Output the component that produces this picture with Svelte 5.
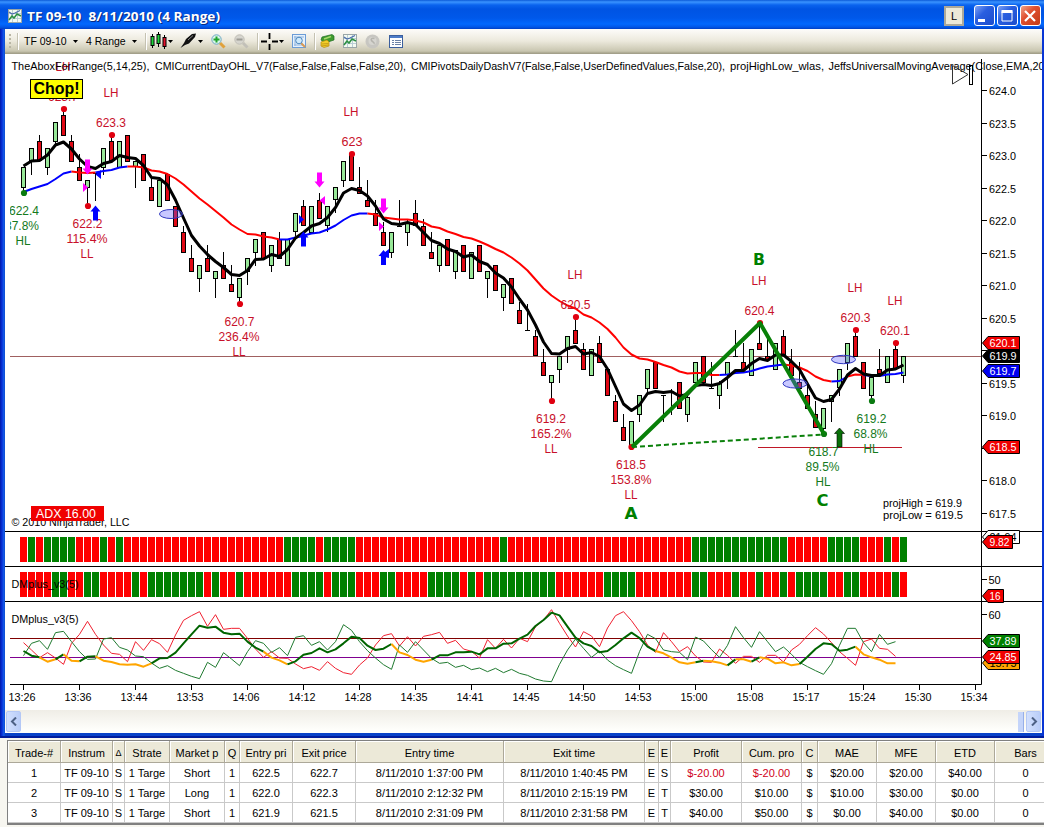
<!--
  App.svelte
  Trading chart window with indicator panels and the trades grid below it.
-->

<script lang="ts">
	type Candle = { high: number; top: number; bottom: number; low: number; up: boolean };

	const BAR_WIDTH = 8;
	const FIRST_BAR = 23.5;

	const barX = (i: number) => FIRST_BAR + i * BAR_WIDTH;
	const priceY = (price: number) => 90 + (624 - price) * 65;

	// direction, high, body top, body bottom, low
	const rawCandles = `
		g 167 167 188 191;g 148 148 161 175;r 135 141 161 161;g 148 148 168 175;g 122 122 142 144;r 109 115 136 136;r 135 141 162 162;r 154 167 181 181;g 180 180 188 206;g 173 173 173 201;
		g 148 148 168 175;r 135 141 161 161;g 141 141 168 168;r 135 135 162 162;g 161 161 167 188;r 154 154 181 181;r 178 187 201 201;g 180 180 207 207;r 174 174 201 201;r 206 206 227 227;
		r 226 232 253 253;r 245 258 272 272;g 265 265 279 292;r 245 258 272 272;g 271 271 279 298;r 252 265 279 279;r 265 284 292 292;g 278 278 298 304;g 258 258 272 285;g 239 239 253 266;
		r 232 232 259 259;g 245 245 266 272;r 232 239 259 259;g 239 239 266 266;g 213 213 232 236;r 200 206 226 226;g 206 206 233 233;r 193 200 219 219;g 206 206 226 232;g 187 187 200 213;
		g 161 161 181 187;r 152 155 181 181;r 167 187 194 194;r 180 200 207 207;r 200 213 226 226;r 222 232 246 246;g 232 232 253 258;g 200 226 226 226;g 219 223 233 246;r 200 213 226 226;
		r 219 226 246 246;r 232 252 259 259;g 245 245 266 272;r 239 239 266 266;g 250 250 272 279;r 245 245 272 272;g 252 252 279 279;r 245 245 272 272;g 271 271 279 298;r 265 265 291 291;
		g 284 284 298 311;r 278 278 304 304;r 302 310 324 324;g 304 330 330 330;r 330 336 356 356;r 349 362 376 376;g 375 375 383 400;g 356 356 370 383;g 336 336 350 363;r 317 330 344 344;
		r 343 349 370 370;g 349 349 376 376;r 336 343 363 363;r 369 369 396 396;r 395 401 422 422;r 414 427 441 441;g 421 421 447 447;g 395 395 415 422;g 369 369 389 393;r 362 362 389 389;
		g 395 395 395 422;g 389 391 391 415;r 382 382 409 409;g 395 397 415 422;g 362 362 383 387;r 356 356 383 383;g 362 388 388 388;g 381 383 396 409;g 362 362 375 389;g 330 356 356 356;
		r 343 362 370 370;g 349 349 376 376;r 323 343 350 350;r 337 356 360 360;g 343 343 370 370;r 330 336 356 356;r 349 362 376 376;r 362 382 389 389;r 383 395 409 409;r 401 414 428 428;
		g 408 408 429 434;g 395 395 402 422;g 369 369 388 396;g 343 343 363 370;r 330 336 357 357;r 362 362 389 389;g 377 377 396 400;r 349 369 374 374;g 356 356 383 383;r 344 349 369 369;
		g 356 356 376 383`;

	const candles: Candle[] = rawCandles.split(';').map((row) => {
		const [dir, high, top, bottom, low] = row.trim().split(' ');
		return { up: dir === 'g', high: +high, top: +top, bottom: +bottom, low: +low };
	});

	const fastAverage = [
		166, 161, 160.5, 155, 145, 142, 149, 159, 166.5, 168.5, 163.5, 161.5, 155.5, 157.5, 158.5, 165.5, 177.5, 178.5, 185, 200,
		218, 235.5, 246, 254.5, 261.5, 267.5, 274.5, 275.5, 270.5, 259.5, 259, 254.5, 256.5, 249.5, 238, 232.5, 226, 223.5, 217.5, 207.5,
		193, 188.5, 190.5, 196, 206, 219, 223.5, 224.5, 222.5, 224.5, 232.5, 240.5, 243.5, 249, 251.5, 257, 255, 261.5, 264.5, 273,
		278, 287, 299, 310, 325, 342, 353.5, 354, 348.5, 346.5, 354, 352.5, 356.5, 369, 386.5, 404, 410.5, 405, 393.5, 391.5,
		392.5, 391.5, 396, 394.5, 385.5, 384.5, 385.5, 383.5, 377.5, 370.5, 370.5, 363.5, 358.5, 360.5, 355, 355, 361.5, 369.5, 384, 398,
		401.5, 399.5, 389, 375, 368.5, 374, 375.5, 375.5, 370, 369, 365
	];

	const slowAverage = [
		192, 189, 186.5, 184, 179, 173.5, 171.5, 172.5, 173, 172.5, 171, 170, 167.5, 166.5, 166.5, 167.5, 170.5, 171.5, 174, 178.5,
		184.5, 191.5, 198.5, 204.5, 211, 217.5, 224.5, 229.5, 234, 234.5, 236.5, 237.5, 239.5, 239.5, 237.5, 235.5, 233.5, 232.5, 229.5, 225.5,
		220, 215.5, 213.5, 213.5, 214.5, 217.5, 218.5, 219.5, 219.5, 220.5, 222.5, 226.5, 228, 231.5, 234, 237, 238.5, 241.5, 245, 249,
		252.5, 257.5, 263.5, 270.5, 279.5, 288.5, 295.5, 301, 305.5, 308.5, 314.5, 317.5, 322.5, 329, 337.5, 347.5, 354.5, 358.5, 359.5, 362,
		365, 367.5, 371.5, 373.5, 373, 373, 375, 375, 374.5, 373, 372.5, 371, 368.5, 366.5, 365.5, 364.5, 365.5, 367.5, 371, 376.5,
		380, 381.5, 381, 376.5, 374.5, 375, 376, 376, 374.5, 374, 372.5
	];
	const slowRuns = [
		[0, 6, 'blue'], [6, 9, 'red'], [9, 13, 'blue'], [13, 32, 'red'], [32, 43, 'blue'], [43, 87, 'red'],
		[87, 95, 'blue'], [95, 101, 'red'], [101, 103, 'blue'], [103, 105, 'red'], [105, 110, 'blue']
	] as [number, number, string][];

	// DM panel values are thirds of a pixel below y = 500
	const dmMinus = [
		428, 450, 473, 458, 474, 493, 430, 403, 364, 403, 435, 460, 463, 485, 425, 451, 419, 431, 457, 405,
		361, 347, 335, 379, 344, 388, 385, 385, 415, 447, 472, 455, 474, 475, 492, 506, 500, 511, 485, 505,
		518, 523, 495, 474, 435, 407, 401, 438, 410, 438, 409, 404, 397, 430, 421, 447, 454, 474, 419, 445,
		418, 444, 415, 425, 380, 360, 329, 370, 408, 441, 395, 408, 440, 384, 347, 335, 362, 395, 435, 457,
		398, 425, 455, 440, 468, 486, 487, 447, 466, 490, 469, 469, 487, 466, 466, 486, 450, 433, 407, 383,
		402, 428, 455, 475, 496, 425, 417, 445, 448, 469
	];
	const dmPlus = [
		467, 430, 422, 448, 398, 394, 425, 455, 478, 477, 417, 413, 442, 450, 468, 470, 489, 505, 497, 511,
		520, 529, 536, 487, 502, 458, 477, 497, 455, 422, 430, 457, 443, 467, 412, 407, 436, 425, 450, 425,
		374, 391, 425, 452, 474, 494, 508, 435, 457, 425, 450, 475, 490, 487, 502, 496, 509, 504, 515, 505,
		518, 508, 520, 526, 537, 543, 545, 493, 450, 417, 445, 472, 453, 480, 497, 509, 520, 455, 403, 416,
		450, 455, 457, 479, 411, 423, 449, 472, 436, 380, 413, 442, 395, 425, 455, 441, 463, 487, 500, 512,
		523, 491, 436, 385, 385, 428, 455, 403, 433, 425
	];
	const adx = [
		453, 467, 472, 485, 478, 463, 482, 484, 470, 469, 482, 486, 493, 494, 493, 500, 490, 475, 474, 458,
		430, 403, 377, 383, 380, 398, 403, 401, 425, 443, 455, 473, 481, 493, 484, 464, 459, 445, 457, 448,
		430, 410, 414, 437, 450, 446, 432, 457, 465, 479, 485, 479, 466, 466, 457, 457, 455, 463, 445, 445,
		431, 430, 416, 404, 378, 360, 338, 346, 380, 413, 430, 438, 457, 453, 435, 415, 398, 414, 440, 453,
		460, 473, 487, 491, 487, 482, 484, 488, 496, 478, 478, 485, 472, 476, 490, 487, 496, 492, 470, 447,
		430, 433, 452, 449, 440, 463, 472, 479, 490, 490
	];
	const adxRuns = [
		[0, 2, 'darkgreen'], [2, 4, 'orange'], [4, 5, 'darkgreen'], [5, 7, 'orange'], [7, 9, 'darkgreen'], [9, 16, 'orange'],
		[16, 30, 'darkgreen'], [30, 33, 'orange'], [33, 46, 'darkgreen'], [46, 51, 'orange'], [51, 79, 'darkgreen'],
		[79, 84, 'orange'], [84, 85, 'darkgreen'], [85, 88, 'orange'], [88, 89, 'darkgreen'], [89, 91, 'orange'],
		[91, 92, 'darkgreen'], [92, 97, 'orange'], [97, 104, 'darkgreen'], [104, 109, 'orange']
	] as [number, number, string][];

	// Run lengths, decoded to one letter per bar
	function decode(runs: string): string[] {
		return runs.split(' ').flatMap((r) => Array(+r.slice(1)).fill(r[0]));
	}
	const strips = [
		{ y: 537, bars: decode('r1 g1 r1 g4 r3 g1 r1 g1 r20 g4 r1 g4 r18 g1 r23 g12 r5 g4 r3 g1 r1 g1') },
		{ y: 572, bars: decode('r4 g2 r2 g2 r4 g1 r1 g7 r1 g1 r2 g1 r6 g4 r1 g3 r3 g2 r4 g4 r1 g1 r1 g9 r6 g4 r7 g2 r3 g1 r2 g1 r2 g1 r1 g4 r2 g2 r4 g1 r1') }
	];

	function points(values: number[], from = 0, to = values.length - 1): string {
		return values.slice(from, to + 1).map((v, k) => `${barX(from + k)},${v}`).join(' ');
	}
	const toPanel = (values: number[]) => values.map((v) => 500 + v / 3);
	const adxPx = toPanel(adx);

	const priceTicks = Array.from({ length: 14 }, (_, k) => 624 - k * 0.5);
	const hiddenTicks = [620, 618.5];
	const times = ['13:26', '13:36', '13:44', '13:53', '14:06', '14:12', '14:28', '14:35', '14:41', '14:45', '14:50', '14:53', '15:00', '15:08', '15:17', '15:24', '15:30', '15:34'];

	// Swing labels: x, baseline, text, colour
	const swings = [
		[63, 71, 'LH', 'red'], [63, 101, '623.7', 'red'], [111, 97, 'LH', 'red'], [111, 127, '623.3', 'red'],
		[24, 215, '622.4', 'green'], [22, 230, '37.8%', 'green'], [23, 245, 'HL', 'green'],
		[87.5, 228, '622.2', 'red'], [87, 243, '115.4%', 'red'], [87, 258, 'LL', 'red'],
		[351, 116, 'LH', 'red'], [352, 146, '623', 'red'],
		[239.5, 326, '620.7', 'red'], [239, 341, '236.4%', 'red'], [239, 356, 'LL', 'red'],
		[575, 279, 'LH', 'red'], [575.5, 309, '620.5', 'red'],
		[551, 423, '619.2', 'red'], [551, 438, '165.2%', 'red'], [551, 453, 'LL', 'red'],
		[631, 469, '618.5', 'red'], [631, 484, '153.8%', 'red'], [631, 499, 'LL', 'red'],
		[759, 285, 'LH', 'red'], [759.5, 315, '620.4', 'red'],
		[855, 292, 'LH', 'red'], [855.5, 322, '620.3', 'red'], [895, 305, 'LH', 'red'], [895, 335, '620.1', 'red'],
		[871.5, 423, '619.2', 'green'], [870.5, 438, '68.8%', 'green'], [871, 453, 'HL', 'green'],
		[823.5, 456, '618.7', 'green'], [822.5, 471, '89.5%', 'green'], [823, 486, 'HL', 'green']
	] as [number, number, string, string][];
	const swingWidth: Record<number, number> = { 2: 15, 3: 21, 5: 30, 6: 41 };
	const labelWidth = (t: string) => (t.endsWith('%') ? (t.length === 5 ? 34 : 41) : t === 'LL' ? 13 : swingWidth[t.length]);

	const dots = [
		[64, 109, 'red'], [112, 135, 'red'], [24, 193, 'green'], [88, 206, 'red'], [352, 154, 'red'], [240, 304, 'red'],
		[576, 317, 'red'], [552, 401, 'red'], [631.5, 447, 'red'], [760, 323, 'red'], [856, 330, 'red'], [896, 343, 'red'],
		[872, 401, 'green'], [824, 434, 'green']
	] as [number, number, string][];

	const headings = [
		{ text: 'TheAboxForRange(5,14,25),', x: 11.5, w: 138 },
		{ text: 'CMICurrentDayOHL_V7(False,False,False,False,20),', x: 155, w: 251 },
		{ text: 'CMIPivotsDailyDashV7(False,False,UserDefinedValues,False,20),', x: 411, w: 314 },
		{ text: 'projHighLow_wlas,', x: 730, w: 94 },
		{ text: 'JeffsUniversalMovingAverage(Close,EMA,20', x: 828.5, w: 216 }
	];

	const flags = [
		{ y: 343, text: '620.1', fill: '#f00000', ink: '#fff', w: 37 },
		{ y: 371, text: '619.7', fill: '#0000f0', ink: '#fff', w: 37 },
		{ y: 356, text: '619.9', fill: '#000', ink: '#fff', w: 37 },
		{ y: 447, text: '618.5', fill: '#f00000', ink: '#fff', w: 37 },
		{ y: 537, text: '21.94', fill: '#fff', ink: '#000', w: 37 },
		{ y: 542, text: '9.82', fill: '#f00000', ink: '#fff', w: 30 },
		{ y: 596, text: '16', fill: '#f00000', ink: '#fff', w: 21 },
		{ y: 641, text: '37.89', fill: '#008000', ink: '#fff', w: 37 },
		{ y: 663, text: '15.75', fill: '#ffa500', ink: '#000', w: 37 },
		{ y: 657, text: '24.85', fill: '#f00000', ink: '#fff', w: 37 }
	];

	const columns = ['Trade-#', 'Instrum', 'Δ', 'Strate', 'Market p', 'Q', 'Entry pri', 'Exit price', 'Entry time', 'Exit time', 'E', 'E', 'Profit', 'Cum. pro', 'C', 'MAE', 'MFE', 'ETD', 'Bars'];
	const trades = [
		['1', 'TF 09-10', 'S', '1 Targe', 'Short', '1', '622.5', '622.7', '8/11/2010 1:37:00 PM', '8/11/2010 1:40:45 PM', 'E', 'S', '$-20.00', '$-20.00', '$', '$20.00', '$20.00', '$40.00', '0'],
		['2', 'TF 09-10', 'S', '1 Targe', 'Long', '1', '622.0', '622.3', '8/11/2010 2:12:32 PM', '8/11/2010 2:15:19 PM', 'E', 'T', '$30.00', '$10.00', '$', '$10.00', '$30.00', '$0.00', '0'],
		['3', 'TF 09-10', 'S', '1 Targe', 'Short', '1', '621.9', '621.5', '8/11/2010 2:31:09 PM', '8/11/2010 2:31:58 PM', 'E', 'T', '$40.00', '$50.00', '$', '$0.00', '$40.00', '$0.00', '0']
	];
</script>

{#snippet chartIcon()}
	<svg width="14" height="14" viewBox="0 0 14 14">
		<rect x="0.5" y="0.5" width="13" height="13" fill="#f4faf2" stroke="#9aa6a8" />
		<path d="M1 4.5H13M1 9.5H13M4.5 1V13M9.5 1V13" stroke="#b9cfd6" />
		<path d="M1 3L4 5L7 4L12 1.5" fill="none" stroke="#4b6cab" stroke-width="1.2" />
		<path d="M1 11L4 7L6 9L9 5L13 7" fill="none" stroke="#2c8f43" stroke-width="1.5" />
	</svg>
{/snippet}

{#snippet caret()}
	<svg class="caret" width="5" height="3" viewBox="0 0 5 3"><path d="M0 0H5L2.5 3Z" fill="#000" /></svg>
{/snippet}

{#snippet arrow(x: number, y: number, down: boolean, fill: string)}
	<path
		d={down ? 'M-2.5 -7.5H2.5V1.5H5L0 7.5L-5 1.5H-2.5Z' : 'M-2.5 7.5H2.5V-1.5H5L0 -7.5L-5 -1.5H-2.5Z'}
		transform="translate({x} {y})"
		{fill}
	/>
{/snippet}

<div class="screen">
	<section class="window">
		<header class="titlebar">
			<span class="app-icon">{@render chartIcon()}</span>
			<svg class="caption" width="210" height="24">
				<text x="5" y="17" textLength="193" lengthAdjust="spacingAndGlyphs" xml:space="preserve">TF 09-10&#160; 8/11/2010 (4 Range)</text>
			</svg>
			<button class="link-button">L</button>
			<button class="win-button" aria-label="Minimize"><svg width="20" height="20"><rect x="4" y="13" width="7" height="3" fill="#fff" /></svg></button>
			<button class="win-button" aria-label="Maximize"><svg width="20" height="20"><path d="M5 5.5H15V15H5Z" fill="none" stroke="#fff" /><rect x="4.5" y="4" width="11" height="3" fill="#fff" /></svg></button>
			<button class="win-button close" aria-label="Close"><svg width="20" height="20"><path d="M5 5L15 15M15 5L5 15" stroke="#fff" stroke-width="2.2" /></svg></button>
		</header>

		<nav class="toolbar">
			<span class="grip"></span>
			<span class="sep first"></span>
			<span class="tool-label instrument">TF 09-10</span>{@render caret()}
			<span class="tool-label range">4 Range</span>{@render caret()}
			<span class="sep bars-sep"></span>
			<svg class="ico candles-ico" width="18" height="18" viewBox="0 0 18 18">
				<path d="M3.5 2V16M9.5 0V15M15.5 3V17" stroke="#000" />
				<rect x="2" y="4.5" width="3" height="9" fill="#1fd43c" stroke="#000" />
				<rect x="8" y="2.5" width="3" height="9" fill="#1fd43c" stroke="#000" />
				<rect x="14" y="5.5" width="3" height="9" fill="#e3122c" stroke="#000" />
			</svg>{@render caret()}
			<svg class="ico pen-ico" width="17" height="16" viewBox="0 0 17 16">
				<path d="M0.5 15L4 10L6 6L12 1L16 0.5L15 4L9 10.5L5 12Z" fill="#111" />
				<path d="M8 7L13 2.5" stroke="#8b8b8b" />
			</svg>{@render caret()}
			<svg class="ico zoomin-ico" width="15" height="15" viewBox="0 0 15 15">
				<path d="M9 9L13.5 13.5" stroke="#e0a13c" stroke-width="3" />
				<circle cx="5.5" cy="5.5" r="4.7" fill="#d9f4ea" stroke="#6fa7c4" />
				<path d="M5.5 2.5V8.5M2.5 5.5H8.5" stroke="#21a52f" stroke-width="2" />
			</svg>
			<svg class="ico zoomout-ico" width="15" height="15" viewBox="0 0 15 15">
				<path d="M9 9L13.5 13.5" stroke="#c2c0b8" stroke-width="3" />
				<circle cx="5.5" cy="5.5" r="4.7" fill="#d6d5ce" stroke="#c0beb6" />
				<path d="M2.5 5.5H8.5" stroke="#9c9b94" stroke-width="2" />
			</svg>
			<span class="sep cross-sep"></span>
			<svg class="ico cross-ico" width="17" height="17" viewBox="0 0 17 17">
				<path d="M8.5 0V6M8.5 11V17M0 8.5H6M11 8.5H17" stroke="#000" stroke-width="1.8" />
			</svg>{@render caret()}
			<svg class="ico find-ico" width="14" height="14" viewBox="0 0 14 14">
				<rect x="0.5" y="0.5" width="13" height="13" fill="#e6f1fb" stroke="#6c9cd6" />
				<path d="M2 3H12M2 11H12M3 2V12" stroke="#8fb4e0" />
				<path d="M9 9L13 13" stroke="#d99a52" stroke-width="2" />
				<circle cx="7" cy="6.5" r="3.3" fill="#cfe9fb" stroke="#4b86bd" />
			</svg>
			<span class="sep data-sep"></span>
			<svg class="ico money-ico" width="15" height="14" viewBox="0 0 15 14">
				<path d="M2 3L12 0.5L14 2V6L5 9L1 6Z" fill="#3f9a2e" stroke="#1f6f22" stroke-width="0.7" />
				<path d="M4 5L11 2.5" stroke="#a7db6a" stroke-width="1.5" />
				<path d="M1 8L7 6L9 8V12L4 13.5L1 12Z" fill="#f1cf2a" stroke="#b98a13" stroke-width="0.7" />
				<path d="M1.5 10L8.5 9.5M1.5 12L8.5 11" stroke="#b98a13" stroke-width="0.7" />
			</svg>
			<span class="ico study-ico">{@render chartIcon()}</span>
			<svg class="ico disc-ico" width="15" height="15" viewBox="0 0 15 15">
				<circle cx="7.5" cy="7.5" r="7" fill="#c7c6c1" />
				<circle cx="7.5" cy="7" r="4" fill="#d6d5d0" />
				<path d="M9.5 4.5C7 3.5 5.500 5 6.500 6.500S10 8.500 9 10" fill="none" stroke="#b5b4ae" stroke-width="1.5" />
			</svg>
			<svg class="ico list-ico" width="14" height="13" viewBox="0 0 14 13">
				<rect x="0.5" y="0.5" width="13" height="12" fill="#fff" stroke="#3b5f9d" />
				<rect x="1" y="1" width="12" height="2" fill="#4e7dc8" />
				<path d="M3 5.5H5M3 7.5H5M3 9.5H5M6 5.5H12M6 7.5H12M6 9.5H12" stroke="#6d83a6" />
			</svg>
		</nav>

		<svg class="chart" width="1037" height="656" viewBox="5 54 1037 656">
			<clipPath id="plot"><rect x="10" y="54" width="971" height="631" /></clipPath>

			<g clip-path="url(#plot)">
				<path d="M10 356.5H981" stroke="#a06060" />
				<path d="M758 447.5H902" stroke="#c01828" />

				<!-- Candles -->
				{#each candles as c, i}
					<path d="M{barX(i)} {c.high}V{c.low}" stroke="#000" />
					{#if c.bottom === c.top}
						<path d="M{barX(i) - 2.5} {c.top + 0.5}h5" stroke="#000" />
					{:else}
						<rect
							x={barX(i) - 2}
							y={c.top + 0.5}
							width="4"
							height={Math.max(c.bottom - c.top - 1, 1)}
							fill={c.up ? '#98e898' : '#e00814'}
							stroke="#000"
						/>
					{/if}
				{/each}

				<!-- Moving averages -->
				{#each slowRuns as [from, to, color]}
					<polyline points={points(slowAverage, from, to)} class="slow" stroke={color} />
				{/each}
				<polyline points={points(fastAverage)} class="fast" />

				<!-- Swing labels -->
				{#each swings as [x, y, text, color]}
					<text {x} {y} class="swing {color}" textLength={labelWidth(text)} lengthAdjust="spacingAndGlyphs">{text}</text>
				{/each}
				{#each dots as [x, y, color]}
					<circle cx={x} cy={y} r="3.1" fill={color === 'red' ? '#e00010' : '#0a7a10'} />
				{/each}

				<!-- ABC pattern -->
				<path d="M632 447L760 323L824 434" fill="none" stroke="#088008" stroke-width="4" stroke-linejoin="round" />
				<path d="M632 447L824 434.5" stroke="#0a800a" stroke-width="2" stroke-dasharray="5 3" />
				<text x="631" y="519" class="wave" textLength="13" lengthAdjust="spacingAndGlyphs">A</text>
				<text x="759" y="265" class="wave" textLength="12" lengthAdjust="spacingAndGlyphs">B</text>
				<text x="822.5" y="506" class="wave" textLength="12" lengthAdjust="spacingAndGlyphs">C</text>

				<!-- Entries and exits -->
				{@render arrow(87.5, 167, true, '#ff00ff')}
				{@render arrow(95.5, 213, false, '#0000ff')}
				{@render arrow(303.5, 239, false, '#0000ff')}
				{@render arrow(319.5, 180, true, '#ff00ff')}
				{@render arrow(383.5, 206, true, '#ff00ff')}
				{@render arrow(383.5, 257.5, false, '#0000ff')}
				<path d="M839.5 428L844.5 433.5H842V447H837V433.5H834.5Z" fill="#087008" stroke="#000" stroke-width="0.6" />
				<path d="M83 183V192L88 187.5ZM325 196V205L319.5 200.5ZM379 222V231L384 226.5Z" fill="#ff00ff" />
				<path d="M101 170V179L95.5 174.5ZM299 215V224L304 219.5ZM380 256L389 249V258Z" fill="#0000ff" />
				<g fill="#6060ff" fill-opacity="0.35" stroke="#3038c0">
					<ellipse cx="171" cy="214" rx="11.5" ry="4.5" />
					<ellipse cx="795" cy="383.5" rx="12" ry="4.5" />
					<ellipse cx="843.5" cy="359.5" rx="12" ry="4.2" />
				</g>

				<text x="883" y="507" class="small" textLength="79" lengthAdjust="spacingAndGlyphs">projHigh = 619.9</text>
				<text x="883" y="519" class="small" textLength="80" lengthAdjust="spacingAndGlyphs">projLow = 619.5</text>
				<text x="11.5" y="526" class="small" textLength="118" lengthAdjust="spacingAndGlyphs">© 2010 NinjaTrader, LLC</text>
				<rect x="31" y="506" width="73" height="15" fill="#f00000" />
				<text x="36" y="518" class="adx" textLength="60" lengthAdjust="spacingAndGlyphs">ADX 16.00</text>
				<rect x="30.5" y="79.5" width="52" height="19" fill="#ffff00" stroke="#000" />
				<text x="33.5" y="94" class="chop" textLength="46" lengthAdjust="spacingAndGlyphs">Chop!</text>

				<!-- Indicator strips -->
				{#each strips as strip}
					{#each strip.bars as bar, i}
						<rect x={20 + i * BAR_WIDTH} y={strip.y} width="7" height="25" fill={bar === 'g' ? '#008000' : '#ff0000'} />
					{/each}
				{/each}
				<text x="11.5" y="588" class="small" textLength="67" lengthAdjust="spacingAndGlyphs">DMplus_v3(5)</text>

				<!-- DM panel -->
				<path d="M10 638.5H981" stroke="#800000" />
				<path d="M10 657.5H981" stroke="#800090" />
				<polyline points={points(toPanel(dmMinus))} class="thin" stroke="#f02030" />
				<polyline points={points(toPanel(dmPlus))} class="thin" stroke="#207a30" />
				{#each adxRuns as [from, to, color]}
					<polyline points={points(adxPx, from, to)} class="adx-line" stroke={color} />
				{/each}
				<text x="11.5" y="623" class="small" textLength="67" lengthAdjust="spacingAndGlyphs">DMplus_v3(5)</text>
			</g>

			<!-- Indicator names -->
			{#each headings as h}
				<text x={h.x} y="70" class="small" textLength={h.w} lengthAdjust="spacingAndGlyphs">{h.text}</text>
			{/each}
			<path d="M952.5 65.5V84L968 74.5Z" fill="none" stroke="#333" />
			<rect x="969.5" y="65.5" width="3" height="19" fill="none" stroke="#000" />

			<!-- Axes -->
			<path d="M981.5 59V684.5H10M5 531.5H1042M5 566.5H1042M5 601.5H1042M981 579.5h6M981 614.5h6" fill="none" stroke="#000" />
			{#each priceTicks as price}
				<path d="M982 {Math.round(priceY(price)) + 0.5}h5" stroke="#000" />
				{#if !hiddenTicks.includes(price)}
					<text x="989" y={priceY(price) + 5} class="small" textLength="27" lengthAdjust="spacingAndGlyphs">{price.toFixed(1)}</text>
				{/if}
			{/each}
			<text x="988.5" y="584" class="small">50</text>
			<text x="988.5" y="619" class="small">60</text>
			{#each times as t, k}
				<path d="M{FIRST_BAR + k * 56} 685v5" stroke="#000" />
				<text x={FIRST_BAR - 1.5 + k * 56} y="701" class="small middle" textLength="27" lengthAdjust="spacingAndGlyphs">{t}</text>
			{/each}

			<!-- Price flags -->
			{#each flags as f}
				<path d="M982.5 {f.y}L988 {f.y - 6.5}H{982.5 + f.w}V{f.y + 6.5}H988Z" fill={f.fill} stroke="#000" />
				<text x="989.5" y={f.y + 4} class="small" fill={f.ink} textLength={f.w - 10} lengthAdjust="spacingAndGlyphs">{f.text}</text>
			{/each}
		</svg>

		<div class="scrollbar">
			<button class="scroll-button" aria-label="Scroll left"><svg width="8" height="9"><path d="M6 0.5L2 4.5L6 8.5" /></svg></button>
			<span class="track"></span>
			<span class="thumb"></span>
			<button class="scroll-button" aria-label="Scroll right"><svg width="8" height="9"><path d="M2 0.5L6 4.5L2 8.5" /></svg></button>
		</div>
	</section>

	<section class="trades">
		<div class="row head">
			{#each columns as name}
				<span class="cell" class:delta={name === 'Δ'}>{name}</span>
			{/each}
		</div>
		{#each trades as trade}
			<div class="row">
				{#each trade as value}
					<span class="cell" class:loss={value.startsWith('$-')}>{value}</span>
				{/each}
			</div>
		{/each}
	</section>
</div>

<style>
	:global(body) {
		margin: 0;
		background: #fff;
		overflow: hidden;
	}

	.screen {
		width: 1044px;
		height: 827px;
		overflow: hidden;
		background: #f7f6f0;
		font-family: 'Liberation Sans', Arial, sans-serif;
		font-size: 11px;
		color: #000;
	}

	button {
		padding: 0;
		font: inherit;
		box-sizing: border-box;
	}

	/* Window frame */
	.window {
		box-sizing: border-box;
		width: 1044px;
		height: 738px;
		padding: 0 2px 5px 5px;
		background: linear-gradient(90deg, #0019a8 0, #0831d9 2px, #1661e8 4px, #0842c8 5px, #0842c8 1040px, #0831d9 1044px);
		border-bottom: 2px solid #001c9c;
	}

	.titlebar {
		display: flex;
		align-items: center;
		height: 29px;
		margin: 0 -2px 0 -5px;
		padding: 2px 3px 0 8px;
		box-sizing: border-box;
		background: linear-gradient(#0c5ad8 0, #3a93ff 2px, #0a63ee 5px, #0054e3 9px, #0058ea 18px, #0268fe 24px, #0157e8 27px, #003fc4 29px);
	}

	.app-icon {
		display: flex;
	}

	.caption {
		margin-right: auto;
		font: bold 13px 'Open Sans', 'Noto Sans', sans-serif;
		fill: #fff;
	}

	.caption text {
		text-shadow: 1px 1px 0 #0a2a80;
	}

	.link-button {
		width: 20px;
		height: 20px;
		margin-right: 8px;
		border: 2px solid #aca899;
		background: #ece9d8;
	}

	.win-button {
		width: 21px;
		height: 21px;
		margin-left: 2px;
		border: 1px solid #fff;
		border-radius: 3px;
		background: linear-gradient(135deg, #7fa3f5, #2a5fe0 40%, #1c4ccc);
	}

	.win-button svg {
		display: block;
		margin: -1px;
	}

	.win-button.close {
		background: linear-gradient(135deg, #f0a48a, #e05030 40%, #c33a16);
	}

	/* Toolbar */
	.toolbar {
		display: flex;
		align-items: center;
		height: 25px;
		box-sizing: border-box;
		padding-left: 4px;
		background: linear-gradient(#fdfcfa, #ece9dc 50%, #c9c6b0 92%, #a8a58e);
		border-bottom: 1px solid #a3a08a;
	}

	.toolbar > * {
		flex: none;
	}

	.grip {
		width: 2px;
		height: 15px;
		background: repeating-linear-gradient(#b8b5a4 0 2px, transparent 2px 4px);
	}

	.sep {
		width: 1px;
		height: 17px;
		background: #c5c2b2;
		border-right: 1px solid #fff;
	}

	.sep.first { margin-left: 6px; }
	.tool-label { white-space: nowrap; }
	.instrument { width: 47px; margin: 0 2px 0 5px; font-size: 10.5px; }
	.range { width: 43px; margin: 0 3px 0 8px; font-size: 10.5px; }
	.bars-sep { margin-left: 8px; }
	.candles-ico { margin: 0 1px 0 2px; }
	.pen-ico { margin: 0 1px 0 7px; }
	.zoomin-ico { margin-left: 8px; }
	.zoomout-ico { margin-left: 8px; }
	.cross-sep { margin-left: 8px; }
	.cross-ico { margin: 0 1px 0 2px; }
	.find-ico { margin-left: 8px; }
	.data-sep { margin-left: 8px; }
	.money-ico { margin-left: 4px; }
	.study-ico { display: flex; margin-left: 8px; }
	.disc-ico { margin-left: 8px; }
	.list-ico { margin-left: 9px; }

	/* Chart */
	.chart {
		display: block;
		background: #fff;
	}

	.chart text {
		white-space: pre;
	}

	.small {
		font-size: 11px;
	}

	.middle {
		text-anchor: middle;
	}

	.swing {
		font-size: 12px;
		text-anchor: middle;
	}

	.swing.red { fill: #c8102a; }
	.swing.green { fill: #147a1c; }

	.wave {
		font: bold 16px 'DejaVu Sans', Verdana, sans-serif;
		fill: #008000;
		text-anchor: middle;
	}

	.adx {
		font-size: 13px;
		fill: #fff;
	}

	.chop {
		font-size: 16px;
		font-weight: bold;
	}

	polyline {
		fill: none;
		stroke-linejoin: round;
	}

	.slow { stroke-width: 2; }
	.fast { stroke: #000; stroke-width: 3; }
	.thin { stroke-width: 1; }
	.adx-line { stroke-width: 2; }

	/* Scrollbar */
	.scrollbar {
		display: flex;
		align-items: center;
		height: 23px;
		padding: 0 1px;
		background: linear-gradient(#efede6, #fefefb 85%);
	}

	.track {
		flex: 1;
	}

	.thumb {
		width: 5px;
		height: 20px;
		margin-right: 2px;
		background: #c5d5fa;
		border-right: 1px solid #98b0e8;
	}

	.scroll-button {
		display: flex;
		align-items: center;
		justify-content: center;
		width: 15px;
		height: 21px;
		border: 1px solid #b4c8f6;
		border-radius: 2px;
		background: linear-gradient(90deg, #d2e0fe, #b9cdf8);
	}

	.scroll-button path {
		fill: none;
		stroke: #4d6185;
		stroke-width: 2;
	}

	/* Trades grid */
	.trades {
		width: 1050px;
		margin: 2px 0 0 7px;
		border: 1px solid #808080;
		border-width: 1px 0 2px 1px;
		background: #fff;
	}

	.row {
		display: grid;
		grid-template-columns: 53px 52px 12px 45px 55px 15px 53px 63px 148px 141px 14px 12px 71px 60px 16px 59px 59px 59px 62px;
		height: 20px;
	}

	.row.head {
		height: 22px;
	}

	.cell {
		display: flex;
		align-items: center;
		justify-content: center;
		box-sizing: border-box;
		border-right: 1px solid #c9c9c9;
		border-bottom: 1px solid #c9c9c9;
		overflow: hidden;
		white-space: nowrap;
	}

	.head .cell {
		background: #ece9d8;
		border-right-color: #aca899;
		border-bottom-color: #aca899;
		box-shadow: inset 1px 1px 0 #fff;
		padding-top: 2px;
	}

	.cell.delta {
		font-size: 9px;
	}

	.cell.loss {
		color: #d0021b;
	}
</style>
